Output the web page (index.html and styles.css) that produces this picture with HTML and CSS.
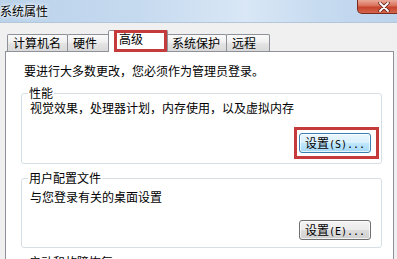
FILE: index.html
```html
<!DOCTYPE html>
<html lang="zh-CN">
<head>
<meta charset="utf-8">
<title>系统属性</title>
<link rel="stylesheet" href="styles.css">
</head>
<body>
<div class="window">
  <div class="titlebar">
    <span class="title">系统属性</span>
    <div class="close">
      <svg class="close-x" width="12" height="10" viewBox="0 0 12 10">
        <path d="M2 1 L10 9 M10 1 L2 9" stroke="#5a1f16" stroke-width="3.4" stroke-linecap="round"/>
        <path d="M2 1 L10 9 M10 1 L2 9" stroke="#ffffff" stroke-width="1.8" stroke-linecap="round"/>
      </svg>
    </div>
  </div>
  <div class="tabs">
    <div class="tab">计算机名</div>
    <div class="tab">硬件</div>
    <div class="tab tab-active">高级</div>
    <div class="tab">系统保护</div>
    <div class="tab">远程</div>
  </div>
  <div class="panel">
    <p class="note">要进行大多数更改，您必须作为管理员登录。</p>
    <fieldset class="group">
      <legend>性能</legend>
      <p class="desc">视觉效果，处理器计划，内存使用，以及虚拟内存</p>
      <div class="actions">
        <span class="marked"><button class="btn btn-hot">设置<span class="hk">(S)...</span></button></span>
      </div>
    </fieldset>
    <fieldset class="group group-profile">
      <legend>用户配置文件</legend>
      <p class="desc">与您登录有关的桌面设置</p>
      <div class="actions">
        <button class="btn">设置<span class="hk">(E)...</span></button>
      </div>
    </fieldset>
    <fieldset class="group group-startup">
      <legend>启动和故障恢复</legend>
    </fieldset>
  </div>
</div>
</body>
</html>
```

FILE: styles.css
```css
html, body {
  margin: 0;
  padding: 0;
}

.window {
  width: 397px;
  height: 259px;
  overflow: hidden;
  position: relative;
  background: #f0f0f0;
  font: 12px/16px "Noto Sans CJK SC", "Noto Sans", sans-serif;
  color: #000;
}

.titlebar {
  height: 22px;
  position: relative;
  display: flex;
  align-items: center;
  background: linear-gradient(90deg, #bad2ea 0%, #c6daef 35%, #d9e7f6 62%, #c7dbf0 80%, #bcd3eb 100%);
  border-bottom: 1px solid #b4c6d9;
}

.title {
  margin-left: 0;
  text-shadow: 0 0 5px #fff, 0 0 3px #fff;
}

.close {
  position: absolute;
  top: 0;
  left: 357px;
  width: 54px;
  height: 14px;
  box-sizing: border-box;
  border: 1px solid #7a2b1f;
  border-top: none;
  border-radius: 0 0 5px 5px;
  background: linear-gradient(#e9a898 0%, #d96f59 45%, #c7432c 55%, #d4654b 100%);
  display: flex;
  justify-content: center;
  align-items: center;
}

.close-x {
  display: block;
}

.tabs {
  display: flex;
  align-items: flex-end;
  height: 28px;
  padding-left: 7px;
}

.tab {
  height: 17px;
  box-sizing: border-box;
  min-width: 44px;
  padding: 0 6px 0 5px;
  margin-right: -1px;
  border: 1px solid #8e9199;
  border-bottom: none;
  border-radius: 2px 2px 0 0;
  line-height: 16px;
  white-space: nowrap;
  background: linear-gradient(#fbfbfb 0%, #efefef 45%, #e3e3e3 55%, #d9d9d9 100%);
}

.tab-active {
  position: relative;
  z-index: 1;
  height: 22px;
  min-width: 60px;
  padding-left: 10px;
  margin: 0 -2px -1px -2px;
  background: #fff;
}

.tab-active::after {
  content: "";
  position: absolute;
  left: 5px;
  right: 0;
  top: -1px;
  bottom: 0;
  border: 3px solid #c53a3a;
}

.panel {
  height: 220px;
  margin: 0 3px 0 5px;
  padding: 11px 11px 0 15px;
  border: 1px solid #8e9199;
  background: #fff;
}

.note {
  margin: 0 0 0 3px;
}

.group {
  margin: 7px 0 0;
  padding: 0 10px 10px 8px;
  border: 1px solid #d5dfe5;
  border-radius: 3px;
}

.group legend {
  padding: 0 1px;
  margin-left: -2px;
  line-height: 14px;
}

.desc {
  margin: 1px 0 0;
  line-height: 14px;
}

.actions {
  display: flex;
  justify-content: flex-end;
  margin-top: 18px;
}

.group-profile {
  padding-bottom: 7px;
}

.group-profile .desc {
  margin-top: 5px;
}

.group-profile .actions {
  margin-top: 16px;
}

.marked {
  position: relative;
  display: block;
}

.marked::after {
  content: "";
  position: absolute;
  top: -6px;
  bottom: -6px;
  left: -5px;
  right: -8px;
  border: 3px solid #c53a3a;
}

.btn {
  display: block;
  width: 72px;
  height: 20px;
  padding: 0;
  margin: 0;
  font: 12px/18px "Noto Sans CJK SC", "Noto Sans", sans-serif;
  color: #000;
  border: 1px solid #707070;
  border-radius: 3px;
  background: linear-gradient(#f3f3f3 0%, #ebebeb 48%, #dddddd 52%, #cfcfcf 100%);
  box-shadow: inset 0 0 0 1px rgba(255, 255, 255, 0.7);
}

.btn-hot {
  border-color: #3c7fb1;
  background: linear-gradient(#eaf6fd 0%, #d9f0fc 48%, #bee6fd 52%, #a7d9f5 100%);
}

.hk {
  font-family: "DejaVu Sans Mono", monospace;
  font-size: 10px;
}
```
